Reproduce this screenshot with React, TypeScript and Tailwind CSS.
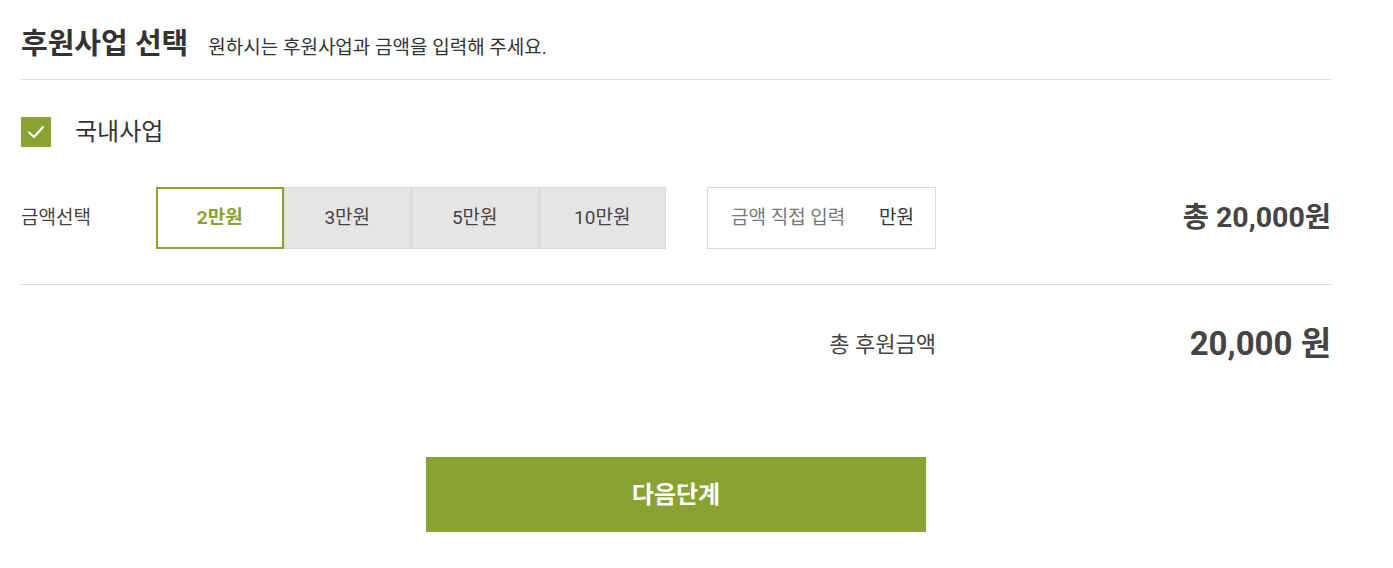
import React, { useState } from 'react';

const AMOUNTS = [2, 3, 5, 10];

const App: React.FC = () => {
  const [selected, setSelected] = useState(2);
  const [checked, setChecked] = useState(true);
  const total = selected * 10000;

  return (
    <div
      className="min-h-screen bg-white text-[#444]"
      style={{ fontFamily: 'Roboto, "Noto Sans CJK KR", sans-serif' }}
    >
      <div className="w-[1310px] ml-[21px]">
        {/* Header */}
        <div className="flex items-end gap-[20px] h-[80px] pb-[20px] border-b border-[#dcdcdc]">
          <h2 className="text-[29px] font-bold leading-none text-[#333]">후원사업 선택</h2>
          <p className="text-[19px] leading-none text-[#333] pb-[2px]">원하시는 후원사업과 금액을 입력해 주세요.</p>
        </div>

        {/* Category */}
        <div className="flex items-center mt-[37px] h-[30px]">
          <button
            onClick={() => setChecked(!checked)}
            className={`w-[30px] h-[30px] flex items-center justify-center ${checked ? 'bg-[#8aa232]' : 'border border-[#ccc] bg-white'}`}
          >
            {checked && (
              <svg width="20" height="20" viewBox="0 0 20 20" fill="none">
                <path d="M3 10.5 L8 15 L17 5" stroke="white" strokeWidth="2.2" strokeLinecap="round" strokeLinejoin="round" />
              </svg>
            )}
          </button>
          <span className="ml-[24px] text-[24px] text-[#333]">국내사업</span>
        </div>

        {/* Amount select */}
        <div className="flex items-center mt-[40px] h-[62px]">
          <span className="w-[135px] text-[19px] text-[#444]">금액선택</span>
          <div className="flex h-full">
            {AMOUNTS.map((a) => (
              <button
                key={a}
                onClick={() => setSelected(a)}
                className={`w-[127.5px] h-full text-[19px] ${
                  selected === a
                    ? 'border-2 border-[#8aa232] bg-white text-[#8aa232] font-bold'
                    : 'border border-[#dadada] bg-[#e5e5e5] text-[#444]'
                }`}
              >
                {a}만원
              </button>
            ))}
          </div>
          <div className="ml-[41px] w-[229px] h-full border border-[#d9d9d9] flex items-center pl-[23px] pr-[21px]">
            <span className="text-[19px] text-[#777] flex-1">금액 직접 입력</span>
            <span className="text-[19px] text-[#333]">만원</span>
          </div>
          <span className="ml-auto text-[28.5px] font-bold text-[#444]">
            총 {total.toLocaleString()}원
          </span>
        </div>

        <div className="mt-[35px] border-b border-[#dcdcdc]" />

        {/* Total */}
        <div className="flex items-center h-[120px] pb-[2px]">
          <span className="ml-auto text-[22px] text-[#444]">총 후원금액</span>
          <span className="w-[395px] text-right text-[33px] font-bold text-[#444]">
            {total.toLocaleString()} 원
          </span>
        </div>

        <div className="flex justify-center mt-[52px]">
          <button className="w-[500px] h-[75px] bg-[#8aa232] text-white text-[24px] font-bold">
            다음단계
          </button>
        </div>
      </div>
    </div>
  );
};

export default App;
